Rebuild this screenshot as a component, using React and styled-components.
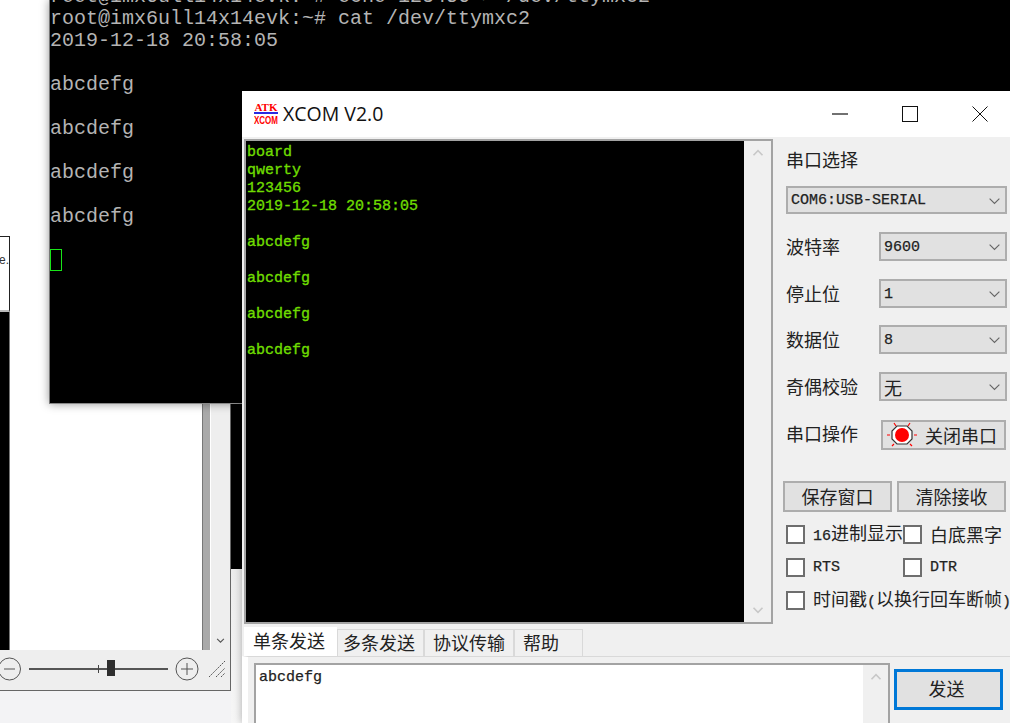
import React from "react";
import styled, { createGlobalStyle } from "styled-components";

const Global = createGlobalStyle`
  html, body { margin: 0; padding: 0; background: #fff; overflow: hidden; }
  #root { width: 1010px; height: 723px; }
`;

const CJK = `"Noto Sans CJK SC", "Noto Sans", sans-serif`;
const MONO = `"Liberation Mono", "Noto Sans CJK SC", monospace`;

const Desktop = styled.div`
  position: relative;
  width: 1010px;
  height: 723px;
  overflow: hidden;
  background: #fff;
`;

/* ---------- photo viewer behind ---------- */
const ViewerBase = styled.div`
  position: absolute;
  left: 0;
  top: 690px;
  width: 231px;
  height: 33px;
  background: #f3f3f5;
`;
const BackStrip = styled.div`
  position: absolute;
  left: 231px;
  top: 0;
  width: 12px;
  height: 723px;
  background: linear-gradient(#000 0 569px, #ececec 569px, #f6f6f6 100%);
`;
const Viewer = styled.div`
  position: absolute;
  left: 0;
  top: 0;
  width: 231px;
  height: 691px;
  box-sizing: border-box;
  display: flex;
  flex-direction: column;
  border-right: 1px solid #666;
  border-bottom: 1px solid #666;
  background: #fff;
`;
const ViewerMain = styled.div`
  flex: 1;
  display: flex;
  min-height: 0;
`;
const PhotoEdge = styled.div`
  width: 10px;
  box-sizing: border-box;
  padding-top: 236px;
  display: flex;
  flex-direction: column;
`;
const PhotoTop = styled.div`
  height: 76px;
  box-sizing: border-box;
  background: #fff;
  border-top: 1px solid #222;
  border-bottom: 2px solid #bbb;
  border-right: 1px solid #222;
  font: 12px/1 "Liberation Sans", sans-serif;
  color: #333;
  padding-top: 17px;
  display: flex;
  justify-content: flex-end;
  white-space: nowrap;
  overflow: hidden;
`;
const PhotoRest = styled.div`
  flex: 1;
  background: #000;
  border-right: 1px solid #777;
`;
const Canvas = styled.div`
  width: 192px;
  background: #fff;
`;
const ViewerTrack = styled.div`
  width: 8px;
  box-sizing: border-box;
  background: #a9a9a9;
  border-left: 1px solid #777;
`;
const ViewerGutter = styled.div`
  flex: 1;
  box-sizing: border-box;
  border-left: 1px solid #fff;
  background: #eeeeee;
  display: flex;
  align-items: flex-end;
  justify-content: center;
  padding-bottom: 6px;
`;
const ViewerStatus = styled.div`
  height: 40px;
  box-sizing: border-box;
  padding-bottom: 2px;
  background: #eeeeee;
  display: flex;
  align-items: center;
`;
const ZoomIcon = styled.svg`
  display: block;
  flex: none;
  margin-left: ${(p) => p.$left || 0}px;
`;
const ZoomSlider = styled.div`
  position: relative;
  width: 139px;
  height: 2px;
  margin: 0 7px 0 8px;
  background: #555;
  flex: none;
`;
const SliderTick = styled.i`
  position: absolute;
  left: 69px;
  top: -3px;
  width: 1px;
  height: 8px;
  background: #444;
`;
const SliderThumb = styled.i`
  position: absolute;
  left: 78px;
  top: -8px;
  width: 8px;
  height: 16px;
  background: #2e2e2e;
`;

/* ---------- terminal ---------- */
const Terminal = styled.div`
  position: absolute;
  left: 49px;
  top: 0;
  width: 1000px;
  height: 404px;
  box-sizing: border-box;
  background: #000;
  border-left: 1px solid #777;
  border-bottom: 1px solid #888;
  box-shadow: 0 0 9px rgba(0, 0, 0, 0.4);
  overflow: hidden;
`;
const TerminalText = styled.pre`
  margin: -14px 0 0 0;
  font: 20px/22px "Liberation Mono", monospace;
  color: #b4b4b4;
`;
const TerminalCursor = styled.span`
  display: inline-block;
  position: relative;
  top: -1px;
  width: 12px;
  height: 22px;
  box-sizing: border-box;
  border: 1px solid #19e619;
  vertical-align: top;
`;

/* ---------- XCOM window ---------- */
const Xcom = styled.div`
  position: absolute;
  left: 242px;
  top: 91px;
  width: 773px;
  height: 632px;
  display: flex;
  flex-direction: column;
  background: #f0f0f0;
  box-shadow: 0 0 8px rgba(0, 0, 0, 0.3);
  color: #222;
  font-family: ${CJK};
`;
const TitleBar = styled.div`
  height: 46px;
  flex: none;
  background: #fff;
  display: flex;
  align-items: center;
  padding-left: 12px;
`;
const Logo = styled.div`
  width: 24px;
  height: 23px;
  margin-top: -1px;
  display: flex;
  flex-direction: column;
  align-items: center;
  color: #f00;
`;
const LogoTop = styled.span`
  font: bold 11px/10px "Liberation Serif", serif;
  text-align: center;
`;
const LogoRule = styled.i`
  display: block;
  flex: none;
  width: 100%;
  height: 2px;
  background: #2a2ae0;
`;
const LogoBottom = styled.span`
  margin-top: 3px;
  font: bold 8px/8px "Liberation Sans", sans-serif;
  transform: scaleY(1.4);
  white-space: nowrap;
`;
const TitleText = styled.div`
  margin-left: 5px;
  font: 19.5px/1 "Open Sans", sans-serif;
  color: #111;
  flex: 1;
`;
const WinButtons = styled.div`
  display: flex;
  height: 100%;
  flex: none;
`;
const WinButton = styled.div`
  width: 70px;
  display: flex;
  align-items: center;
  justify-content: center;
`;

const Upper = styled.div`
  flex: none;
  height: 489px;
  display: flex;
`;
const ReceiveFrame = styled.div`
  width: 529px;
  height: 485px;
  margin: 2px 0 0 2px;
  box-sizing: border-box;
  border: 2px solid #a3a3a3;
  display: flex;
  flex: none;
`;
const ReceiveText = styled.pre`
  flex: 1;
  margin: 0;
  padding: 3px 0 0 1px;
  background: #000;
  color: #6fdc00;
  font: 15px/18px "Liberation Mono", monospace;
  -webkit-text-stroke: 0.35px #6fdc00;
`;
const ScrollBar = styled.div`
  width: ${(p) => p.$w}px;
  flex: none;
  background: #f0f0f0;
  display: flex;
  flex-direction: column;
  justify-content: space-between;
  align-items: center;
  padding: 8px 0;
  box-sizing: border-box;
`;

const Panel = styled.div`
  flex: 1;
  min-width: 0;
  padding: 10px 0 0 13px;
  display: flex;
  flex-direction: column;
  font-size: 18px;
`;
const Heading = styled.div`
  height: 26px;
  line-height: 24px;
  white-space: nowrap;
`;
const Combo = styled.div`
  height: ${(p) => p.$h || 29}px;
  box-sizing: border-box;
  width: ${(p) => p.$w}px;
  margin-top: ${(p) => p.$top || 0}px;
  flex: none;
  border: 2px solid #adadad;
  background: #e1e1e1;
  display: flex;
  align-items: center;
  justify-content: space-between;
  padding: 1px 4px 0 3px;
  font-family: ${MONO};
  font-size: ${(p) => p.$fs || 15}px;
  -webkit-text-stroke: ${(p) => (p.$fs ? 0 : 0.25)}px;
  color: #222;
`;
const FieldRow = styled.div`
  display: flex;
  align-items: center;
  height: ${(p) => p.$h || 29}px;
  margin-top: ${(p) => p.$top}px;
`;
const FieldLabel = styled.div`
  width: 93px;
  flex: none;
  white-space: nowrap;
  line-height: 24px;
  padding-bottom: ${(p) => p.$lift}px;
`;
const LedButton = styled.div`
  width: 125px;
  height: 30px;
  box-sizing: border-box;
  margin-left: 2px;
  border: 2px solid #adadad;
  background: #e1e1e1;
  display: flex;
  align-items: center;
  padding-left: 3px;
  gap: 7px;
  line-height: 24px;
`;
const ButtonRow = styled.div`
  display: flex;
  gap: 5px;
  margin: 31px 0 0 -3px;
`;
const PlainButton = styled.div`
  width: 109px;
  height: 31px;
  box-sizing: border-box;
  border: 2px solid #adadad;
  background: #e1e1e1;
  display: flex;
  align-items: center;
  justify-content: center;
  line-height: 24px;
  padding-bottom: 2px;
`;
const CheckGrid = styled.div`
  display: grid;
  grid-template-columns: 117px 1fr;
  grid-auto-rows: 19px;
  margin-top: ${(p) => p.$top}px;
  line-height: 19px;
`;
const Check = styled.div`
  display: flex;
  align-items: center;
  white-space: nowrap;
  gap: 8px;
`;
const CheckBox = styled.i`
  width: 19px;
  height: 19px;
  box-sizing: border-box;
  flex: none;
  background: #fff;
  border: 2px solid #6e6e6e;
`;
const Latin = styled.span`
  font-family: "Liberation Mono", monospace;
  font-size: 15px;
  -webkit-text-stroke: 0.25px;
`;

const TabStrip = styled.div`
  flex: none;
  height: 30px;
  margin-left: 2px;
  display: flex;
  align-items: flex-end;
`;
const Tab = styled.div`
  box-sizing: border-box;
  width: ${(p) => p.$w}px;
  height: ${(p) => (p.$active ? 29 : 27)}px;
  padding: 0 0 ${(p) => (p.$active ? 5 : 3)}px ${(p) => p.$pad}px;
  background: ${(p) => (p.$active ? "#fff" : "#f0f0f0")};
  border: 1px solid ${(p) => (p.$active ? "#fff" : "#d9d9d9")};
  border-bottom: 0;
  display: flex;
  align-items: center;
  font-size: 18px;
  line-height: 24px;
  white-space: nowrap;
`;
const SendPane = styled.div`
  flex: 1;
  min-height: 0;
  display: flex;
  background: #f0f0f0;
  border-top: 1px solid #d9d9d9;
  border-left: 6px solid #fff;
  padding: 6px 0 0 6px;
`;
const SendBox = styled.div`
  width: 636px;
  height: 70px;
  box-sizing: border-box;
  border: 2px solid #a3a3a3;
  border-bottom: 0;
  display: flex;
  flex: none;
`;
const SendText = styled.div`
  flex: 1;
  background: #fff;
  padding: 4px 0 0 3px;
  font: 15px/18px "Liberation Mono", monospace;
  -webkit-text-stroke: 0.25px;
  color: #222;
`;
const SendButton = styled.div`
  width: 109px;
  height: 41px;
  box-sizing: border-box;
  margin: 6px 0 0 4px;
  border: 3px solid #0078d7;
  background: #e1e1e1;
  display: flex;
  align-items: center;
  justify-content: center;
  font-size: 18px;
  line-height: 24px;
  padding: 0 4px 3px 0;
`;

const Chevron = ({ up, color = "#7a7a7a", w = 16, h = 9, sw = 1.4 }) => (
  <svg width={w} height={h} viewBox="0 0 16 9" style={{ display: "block", flex: "none" }}>
    <path
      d={up ? "M2 7.5 8 1.5l6 6" : "M2 1.5 8 7.5l6-6"}
      fill="none"
      stroke={color}
      strokeWidth={sw}
    />
  </svg>
);

const Led = () => (
  <svg width="32" height="26" viewBox="0 0 32 26" style={{ display: "block", flex: "none" }}>
    <path d="M11 4h10l5 5v8l-5 5H11l-5-5V9z" fill="#fff" stroke="#333" strokeWidth="1.2" />
    <circle cx="16" cy="13" r="7" fill="#f00" />
    <path
      d="M1 13h3M28 13h3M8 1l2 3M24 1l-2 3M6 24l2-2M26 24l-2-2"
      stroke="#f00"
      strokeWidth="1.2"
      fill="none"
    />
  </svg>
);

const fields = [
  { label: "波特率", value: "9600", top: 18 },
  { label: "停止位", value: "1", top: 18 },
  { label: "数据位", value: "8", top: 17 },
  { label: "奇偶校验", value: "无", top: 18, fs: 18 },
];

const tabs = [
  { label: "单条发送", w: 93, pad: 8, active: true },
  { label: "多条发送", w: 87, pad: 5 },
  { label: "协议传输", w: 90, pad: 8 },
  { label: "帮助", w: 69, pad: 8 },
];

const receive = `board
qwerty
123456
2019-12-18 20:58:05

abcdefg

abcdefg

abcdefg

abcdefg`;

const termLines = `root@imx6ull14x14evk:~# echo 123456 > /dev/ttymxc2
root@imx6ull14x14evk:~# cat /dev/ttymxc2
2019-12-18 20:58:05

abcdefg

abcdefg

abcdefg

abcdefg

`;

export default function App() {
  return (
    <Desktop>
      <Global />
      <ViewerBase />
      <BackStrip />
      <Viewer>
        <ViewerMain>
          <PhotoEdge>
            <PhotoTop>e.</PhotoTop>
            <PhotoRest />
          </PhotoEdge>
          <Canvas />
          <ViewerTrack />
          <ViewerGutter>
            <Chevron color="#555" w={9} h={7} sw={2} />
          </ViewerGutter>
        </ViewerMain>
        <ViewerStatus>
          <ZoomIcon width="21" height="24" viewBox="0 0 21 24">
            <circle cx="9.5" cy="12" r="11" fill="none" stroke="#555" strokeWidth="1" />
            <path d="M4 12h11" stroke="#555" strokeWidth="1" />
          </ZoomIcon>
          <ZoomSlider>
            <SliderTick />
            <SliderThumb />
          </ZoomSlider>
          <ZoomIcon width="24" height="24" viewBox="0 0 24 24">
            <circle cx="12" cy="12" r="11" fill="none" stroke="#555" strokeWidth="1" />
            <path d="M6 12h12M12 6v12" stroke="#555" strokeWidth="1" />
          </ZoomIcon>
          <ZoomIcon $left={9} width="18" height="18" viewBox="0 0 18 18">
            <path d="M1 17 17 1M8 17l9-9M13 17l4-4" stroke="#555" strokeWidth="1" fill="none" strokeDasharray="2 1" />
          </ZoomIcon>
        </ViewerStatus>
      </Viewer>

      <Terminal>
        <TerminalText>
          {termLines}
          <TerminalCursor />
        </TerminalText>
      </Terminal>

      <Xcom>
        <TitleBar>
          <Logo>
            <LogoTop>ATK</LogoTop>
            <LogoRule />
            <LogoBottom>XCOM</LogoBottom>
          </Logo>
          <TitleText>XCOM V2.0</TitleText>
          <WinButtons>
            <WinButton>
              <svg width="16" height="2" viewBox="0 0 16 2"><path d="M0 1h16" stroke="#111" strokeWidth="1.2" /></svg>
            </WinButton>
            <WinButton>
              <svg width="16" height="16" viewBox="0 0 16 16"><rect x="0.5" y="0.5" width="15" height="15" fill="none" stroke="#111" /></svg>
            </WinButton>
            <WinButton>
              <svg width="16" height="16" viewBox="0 0 16 16"><path d="M0.5 0.5l15 15M15.5 0.5l-15 15" stroke="#111" /></svg>
            </WinButton>
          </WinButtons>
        </TitleBar>

        <Upper>
          <ReceiveFrame>
            <ReceiveText>{receive}</ReceiveText>
            <ScrollBar $w={27}>
              <Chevron up color="#c8c8c8" sw={2.2} w={12} h={8} />
              <Chevron color="#c8c8c8" sw={2.2} w={12} h={8} />
            </ScrollBar>
          </ReceiveFrame>
          <Panel>
            <Heading>串口选择</Heading>
            <Combo $w={221} $h={28} $top={13}>
              COM6:USB-SERIAL
              <Chevron color="#666" w={13} h={8} />
            </Combo>
            {fields.map((f) => (
              <FieldRow key={f.label} $top={f.top}>
                <FieldLabel $lift={2}>{f.label}</FieldLabel>
                <Combo $w={128} $fs={f.fs}>
                  {f.value}
                  <Chevron color="#666" w={13} h={8} />
                </Combo>
              </FieldRow>
            ))}
            <FieldRow $top={19} $h={30}>
              <FieldLabel $lift={4}>串口操作</FieldLabel>
              <LedButton>
                <Led />
                关闭串口
              </LedButton>
            </FieldRow>
            <ButtonRow>
              <PlainButton>保存窗口</PlainButton>
              <PlainButton>清除接收</PlainButton>
            </ButtonRow>
            <CheckGrid $top={13}>
              <Check>
                <CheckBox />
                <span><Latin>16</Latin>进制显示</span>
              </Check>
              <Check>
                <CheckBox />
                白底黑字
              </Check>
            </CheckGrid>
            <CheckGrid $top={14}>
              <Check>
                <CheckBox />
                <Latin>RTS</Latin>
              </Check>
              <Check>
                <CheckBox />
                <Latin>DTR</Latin>
              </Check>
            </CheckGrid>
            <CheckGrid $top={14}>
              <Check>
                <CheckBox />
                <span>时间戳<Latin>(</Latin>以换行回车断帧<Latin>)</Latin></span>
              </Check>
            </CheckGrid>
          </Panel>
        </Upper>

        <TabStrip>
          {tabs.map((t) => (
            <Tab key={t.label} $active={t.active} $w={t.w} $pad={t.pad}>{t.label}</Tab>
          ))}
        </TabStrip>
        <SendPane>
          <SendBox>
            <SendText>abcdefg</SendText>
            <ScrollBar $w={25}>
              <Chevron up color="#c8c8c8" sw={2.2} w={12} h={8} />
            </ScrollBar>
          </SendBox>
          <SendButton>发送</SendButton>
        </SendPane>
      </Xcom>
    </Desktop>
  );
}
